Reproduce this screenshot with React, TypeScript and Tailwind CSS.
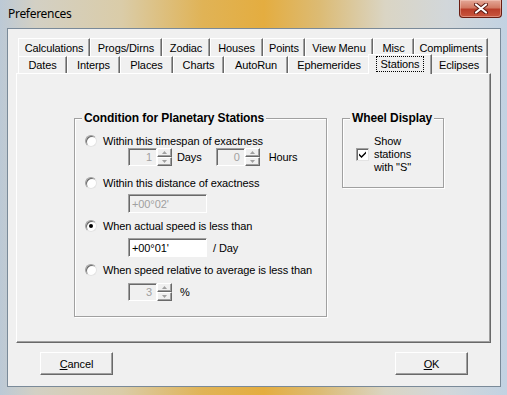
import type { ReactNode } from "react";

const row1 = [
  { label: "Calculations", w: "w-[72px]" },
  { label: "Progs/Dirns", w: "w-[72px]" },
  { label: "Zodiac", w: "w-[48px]" },
  { label: "Houses", w: "w-[53px]" },
  { label: "Points", w: "w-[42px]" },
  { label: "View Menu", w: "w-[68px]" },
  { label: "Misc", w: "w-[41px]" },
  { label: "Compliments", w: "w-[74px]" },
];

const row2 = [
  { label: "Dates", w: "w-[49px]" },
  { label: "Interps", w: "w-[53px]" },
  { label: "Places", w: "w-[53px]" },
  { label: "Charts", w: "w-[51px]" },
  { label: "AutoRun", w: "w-[64px]" },
  { label: "Ephemerides", w: "w-[82px]" },
  { label: "Stations", w: "w-[64px]", selected: true },
  { label: "Eclipses", w: "w-[58px]" },
];

function Tab({ label, w, selected }: { label: string; w: string; selected?: boolean }) {
  if (selected) {
    return (
      <div
        className={`${w} relative z-10 -mx-[2px] -mt-[2px] h-[20px] bg-[#f0f0f0] border-t border-l border-t-white border-l-white border-r border-r-[#696969] shadow-[inset_-1px_0_0_#a0a0a0] flex items-start justify-center pt-[1px]`}
      >
        <span className="border border-dotted border-black px-[4px] leading-[14px]">{label}</span>
      </div>
    );
  }
  return (
    <div
      className={`${w} h-full border-t border-l border-t-white border-l-white border-r border-r-[#696969] shadow-[inset_-1px_0_0_#a0a0a0] flex items-center justify-center`}
    >
      {label}
    </div>
  );
}

function Radio({ checked }: { checked?: boolean }) {
  return (
    <span className="w-[12px] h-[12px] shrink-0 rounded-full bg-white border border-t-[#a0a0a0] border-l-[#a0a0a0] border-r-[#e3e3e3] border-b-[#e3e3e3] shadow-[inset_1px_1px_0_#696969] flex items-center justify-center">
      {checked && <span className="w-[4px] h-[4px] rounded-full bg-black" />}
    </span>
  );
}

function RadioRow({ checked, children }: { checked?: boolean; children: ReactNode }) {
  return (
    <div className="h-[14px] flex items-center gap-[6px] pl-[10px]">
      <Radio checked={checked} />
      <span>{children}</span>
    </div>
  );
}

function Arrow({ up }: { up?: boolean }) {
  return (
    <svg width="5" height="3" viewBox="0 0 5 3">
      <path d={up ? "M2.5 0 L5 3 L0 3Z" : "M0 0 L5 0 L2.5 3Z"} fill="#a0a0a0" />
    </svg>
  );
}

function Spin({ value }: { value: string }) {
  return (
    <div className="h-[18px] flex">
      <div className="w-[29px] h-full bg-[#f0f0f0] text-[#a0a0a0] border border-t-[#a0a0a0] border-l-[#a0a0a0] border-r-white border-b-white shadow-[inset_1px_1px_0_#696969] flex items-center justify-end pr-[4px]">
        {value}
      </div>
      <div className="w-[15px] h-full flex flex-col">
        <div className="h-1/2 border border-t-white border-l-white border-r-[#696969] border-b-[#696969] shadow-[inset_-1px_-1px_0_#a0a0a0] flex items-center justify-center">
          <Arrow up />
        </div>
        <div className="h-1/2 border border-t-white border-l-white border-r-[#696969] border-b-[#696969] shadow-[inset_-1px_-1px_0_#a0a0a0] flex items-center justify-center">
          <Arrow />
        </div>
      </div>
    </div>
  );
}

function Edit({ value, disabled }: { value: string; disabled?: boolean }) {
  return (
    <div
      className={`w-[79px] h-[19px] border border-t-[#a0a0a0] border-l-[#a0a0a0] border-r-white border-b-white shadow-[inset_1px_1px_0_#696969] flex items-center pl-[3px] ${
        disabled ? "bg-[#f0f0f0] text-[#a0a0a0]" : "bg-white text-black"
      }`}
    >
      {value}
    </div>
  );
}

function Group({ title, className, children }: { title: string; className: string; children: ReactNode }) {
  return (
    <div className={`relative border border-[#a0a0a0] shadow-[inset_1px_1px_0_white,1px_1px_0_white] ${className}`}>
      <span className="absolute left-[7px] -top-[8px] px-[2px] bg-[#f0f0f0] font-bold text-[12px] leading-[14px]">
        {title}
      </span>
      {children}
    </div>
  );
}

function Btn({ children }: { children: ReactNode }) {
  return (
    <button
      type="button"
      className="w-[73px] h-[23px] border border-t-white border-l-white border-r-[#696969] border-b-[#696969] shadow-[inset_-1px_-1px_0_#a0a0a0] flex items-center justify-center"
    >
      {children}
    </button>
  );
}

export default function App() {
  return (
    <div className="w-[507px] h-[395px] overflow-hidden flex flex-col bg-[linear-gradient(90deg,#bcc9d6_0%,#d3d0c4_7%,#dacca8_24%,#e0b356_40%,#e4ad40_52%,#dcbb74_63%,#dad5c4_76%,#d2d7da_88%,#c2d2e2_100%)] font-[Liberation_Sans,Arial,sans-serif] text-[11px] leading-[14px] text-black tracking-[-0.1px]">
      {/* title bar */}
      <div className="h-[28px] shrink-0 flex justify-between items-start">
        <span className="pl-[8px] pt-[6px] font-[Noto_Sans,sans-serif] text-[12px] leading-[16px] tracking-[-0.3px]">
          Preferences
        </span>
        <div className="mr-[5px] w-[43px] h-[18px] rounded-b-[4px] border border-t-0 border-[#6a1d12] bg-[linear-gradient(180deg,#e4a898_0%,#d27a64_45%,#b93e2a_55%,#c9563e_100%)] shadow-[inset_0_0_0_1px_rgba(255,220,210,0.4)] flex items-center justify-center">
          <svg width="14" height="11" viewBox="0 0 14 11">
            <path d="M2 1.5 L12 9.5 M12 1.5 L2 9.5" stroke="#5a1810" strokeWidth="4" strokeLinecap="round" />
            <path d="M2 1.5 L12 9.5 M12 1.5 L2 9.5" stroke="#ffffff" strokeWidth="2.2" strokeLinecap="round" />
          </svg>
        </div>
      </div>

      {/* client */}
      <div className="ml-[7px] mr-[6px] h-[359px] shrink-0 border border-[#7a8a99] bg-[#f0f0f0] flex flex-col pt-[9px]">
        <div className="ml-[10px] h-[18px] flex">
          {row1.map((t) => (
            <Tab key={t.label} label={t.label} w={t.w} />
          ))}
        </div>
        <div className="ml-[10px] h-[17px] flex items-start">
          {row2.map((t) => (
            <Tab key={t.label} label={t.label} w={t.w} selected={t.selected} />
          ))}
        </div>

        <div className="ml-[8px] w-[475px] h-[270px] border border-t-white border-l-white border-r-[#696969] border-b-[#696969] shadow-[inset_-1px_-1px_0_#a0a0a0] flex items-start pt-[44px] pl-[57px] gap-[15px]">
          <Group title="Condition for Planetary Stations" className="w-[253px] h-[199px] flex flex-col pt-[15px]">
            <RadioRow>Within this timespan of exactness</RadioRow>
            <div className="ml-[53px] flex items-center">
              <Spin value="1" />
              <span className="ml-[5px]">Days</span>
              <div className="ml-[14px]">
                <Spin value="0" />
              </div>
              <span className="ml-[9px]">Hours</span>
            </div>
            <div className="mt-[10px]">
              <RadioRow>Within this distance of exactness</RadioRow>
            </div>
            <div className="ml-[53px] mt-[4px]">
              <Edit value="+00°02'" disabled />
            </div>
            <div className="mt-[6px]">
              <RadioRow checked>When actual speed is less than</RadioRow>
            </div>
            <div className="ml-[53px] mt-[5px] flex items-center">
              <Edit value="+00°01'" />
              <span className="ml-[6px]">/ Day</span>
            </div>
            <div className="mt-[6px]">
              <RadioRow>When speed relative to average is less than</RadioRow>
            </div>
            <div className="ml-[53px] mt-[6px] flex items-center">
              <Spin value="3" />
              <span className="ml-[8px]">%</span>
            </div>
          </Group>

          <Group title="Wheel Display" className="w-[102px] h-[70px] flex items-center pl-[13px] pt-[2px]">
            <span className="w-[13px] h-[13px] shrink-0 bg-white border border-t-[#a0a0a0] border-l-[#a0a0a0] border-r-[#e3e3e3] border-b-[#e3e3e3] shadow-[inset_1px_1px_0_#696969] flex items-center justify-center">
              <svg width="7" height="7" viewBox="0 0 7 7">
                <path d="M0 2.5 L2.5 5 L7 0.5 L7 2.5 L2.5 7 L0 4.5Z" fill="#000" />
              </svg>
            </span>
            <span className="ml-[5px] leading-[13px]">
              Show
              <br />
              stations
              <br />
              with "S"
            </span>
          </Group>
        </div>

        <div className="mt-[9px] px-[32px] flex justify-between">
          <Btn>
            <span>
              <span className="underline">C</span>ancel
            </span>
          </Btn>
          <Btn>
            <span>
              <span className="underline">O</span>K
            </span>
          </Btn>
        </div>
      </div>
    </div>
  );
}
